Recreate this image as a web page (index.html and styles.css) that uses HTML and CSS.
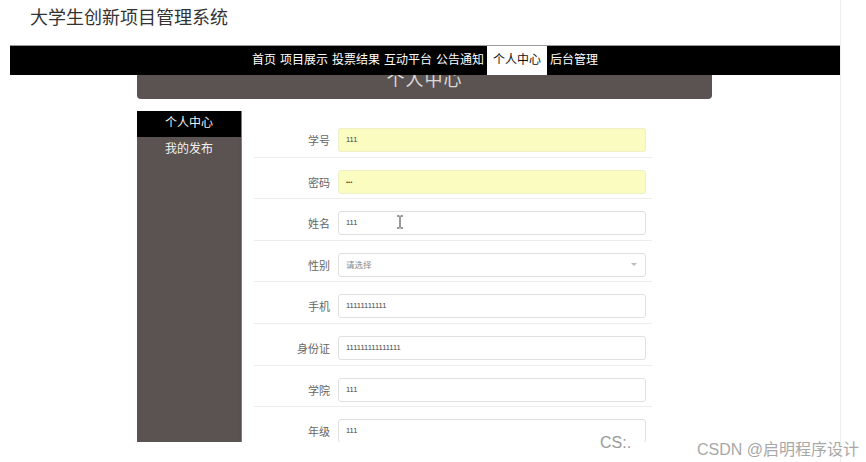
FILE: index.html
```html
<!DOCTYPE html>
<html lang="zh">
<head>
<meta charset="utf-8">
<title>大学生创新项目管理系统</title>
<link rel="stylesheet" href="styles.css">
</head>
<body>
<div class="page">
  <h1 class="title">大学生创新项目管理系统</h1>
  <nav class="nav">
    <a class="nav-item">首页</a>
    <a class="nav-item">项目展示</a>
    <a class="nav-item">投票结果</a>
    <a class="nav-item">互动平台</a>
    <a class="nav-item">公告通知</a>
    <a class="nav-item active">个人中心</a>
    <a class="nav-item">后台管理</a>
  </nav>
  <div class="content">
    <div class="banner">个人中心</div>
    <div class="main">
      <aside class="side">
        <div class="side-item active">个人中心</div>
        <div class="side-item">我的发布</div>
      </aside>
      <form class="card">
        <div class="row"><label class="lbl">学号</label><div class="field filled">111</div></div>
        <div class="row"><label class="lbl">密码</label><div class="field filled pwd">•••</div></div>
        <div class="row"><label class="lbl">姓名</label><div class="field">111</div></div>
        <div class="row"><label class="lbl">性别</label><div class="field select"><span class="ph">请选择</span><span class="caret"></span></div></div>
        <div class="row"><label class="lbl">手机</label><div class="field">11111111111</div></div>
        <div class="row"><label class="lbl">身份证</label><div class="field">111111111111111</div></div>
        <div class="row"><label class="lbl">学院</label><div class="field">111</div></div>
        <div class="row"><label class="lbl">年级</label><div class="field">111</div></div>
      </form>
    </div>
  </div>
  <svg class="ibeam" width="8" height="14" viewBox="0 0 8 14"><path d="M1 1h2.5M4.5 1H7M4 1.5v11M1 13h2.5M4.5 13H7" stroke="#333" stroke-width="1" fill="none"/></svg>
  <div class="wm-small">CS:.</div>
</div>
<div class="watermark">CSDN @启明程序设计</div>
</body>
</html>
```

FILE: styles.css
```css
html, body {
  margin: 0;
  padding: 0;
  background: #fff;
}
body {
  width: 866px;
  height: 462px;
  overflow: hidden;
  position: relative;
  font-family: "Liberation Sans", "Noto Sans CJK SC", sans-serif;
}
.page {
  width: 830px;
  height: 462px;
  margin-left: 10px;
  border-right: 1px solid #eee;
  position: relative;
  overflow: hidden;
}
.title {
  margin: 0;
  padding: 7px 0 0 20px;
  height: 38px;
  font-size: 18px;
  line-height: 22px;
  font-weight: normal;
  color: #333;
}
.nav {
  position: relative;
  z-index: 2;
  height: 29px;
  background: #000;
  border-top: 1px solid #9a9a9a;
  display: flex;
  justify-content: center;
}
.nav-item {
  display: block;
  padding: 0 2px;
  font-size: 12px;
  line-height: 29px;
  color: #fff;
}
.nav-item.active {
  background: #fff;
  color: #111;
  padding: 0 6px;
  margin: 0 1px;
}
.content {
  width: 575px;
  margin-left: 127px;
}
.banner {
  margin-top: -10px;
  height: 34px;
  background: #5a5351;
  border-radius: 0 0 4px 4px;
  color: #dcd8d7;
  font-size: 18px;
  letter-spacing: 1px;
  line-height: 31px;
  text-align: center;
}
.main {
  margin-top: 11px;
  height: 332px;
  display: flex;
  overflow: hidden;
}
.side {
  width: 104px;
  margin-top: 1px;
  background: #5a5351;
  border-right: 1px solid #8a8584;
}
.side-item {
  height: 26px;
  line-height: 25px;
  text-align: center;
  font-size: 12px;
  color: #f2f2f2;
}
.side-item.active {
  background: #000;
}
.card {
  flex: 1;
  margin: 0;
  padding: 6px 0 0 12px;
  background: #fff;
  box-shadow: 0 0 4px rgba(0, 0, 0, 0.18);
}
.row {
  width: 398px;
  display: flex;
  align-items: center;
  padding: 12px 0 4.6px;
  border-bottom: 1px solid #ececec;
}
.lbl {
  width: 84px;
  padding-right: 8px;
  box-sizing: border-box;
  text-align: right;
  font-size: 11px;
  color: #666;
}
.field {
  width: 308px;
  height: 24px;
  box-sizing: border-box;
  border: 1px solid #e0e0e0;
  border-radius: 3px;
  padding-left: 7px;
  font-size: 7.5px;
  line-height: 22px;
  color: #444;
  background: #fff;
}
.field.filled {
  background: #fafdbf;
  border-color: #eef0c8;
}
.field.pwd {
  font-size: 6px;
  letter-spacing: 0;
}
.field.select {
  display: flex;
  align-items: center;
  justify-content: space-between;
  padding-right: 8px;
}
.ph {
  font-size: 8.5px;
  color: #888;
}
.caret {
  width: 0;
  height: 0;
  border-left: 3.5px solid transparent;
  border-right: 3.5px solid transparent;
  border-top: 3.5px solid #bbb;
}
.ibeam {
  position: absolute;
  left: 386px;
  top: 215px;
}
.wm-small {
  position: absolute;
  left: 590px;
  top: 434px;
  font-size: 16px;
  color: #9a9a9a;
}
.watermark {
  position: absolute;
  left: 697px;
  top: 436px;
  font-size: 16px;
  color: #a8a8a8;
  white-space: nowrap;
}
```
